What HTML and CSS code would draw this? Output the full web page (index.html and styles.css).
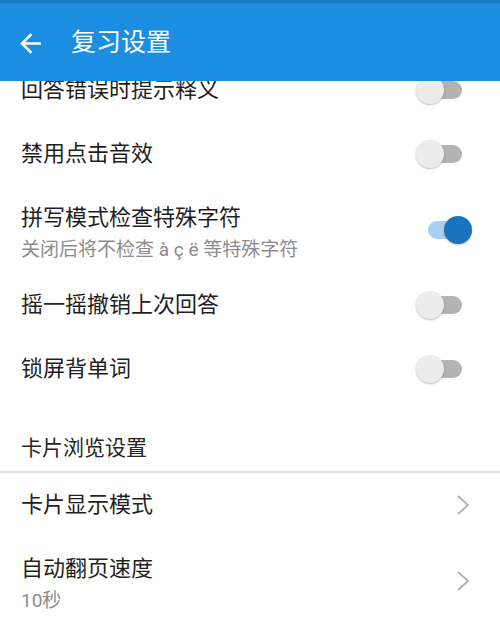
FILE: index.html
```html
<!DOCTYPE html>
<html lang="zh-CN">
<head>
<meta charset="utf-8">
<title>复习设置</title>
<link rel="stylesheet" href="styles.css">
</head>
<body>
<header class="appbar">
  <div class="status"></div>
  <div class="toolbar">
    <svg class="back" viewBox="0 0 24 24" width="31" height="31" aria-hidden="true">
      <path d="M20 11H7.83l5.59-5.59L12 4l-8 8 8 8 1.41-1.41L7.83 13H20v-2z" fill="#fff"/>
    </svg>
    <h1 class="title">复习设置</h1>
  </div>
</header>
<main class="viewport">
  <div class="list">
    <div class="row">
      <div class="label">回答错误时提示释义</div>
      <div class="switch"><span class="track"></span><span class="thumb"></span></div>
    </div>
    <div class="row">
      <div class="label">禁用点击音效</div>
      <div class="switch"><span class="track"></span><span class="thumb"></span></div>
    </div>
    <div class="row two">
      <div class="text">
        <div class="label">拼写模式检查特殊字符</div>
        <div class="summary">关闭后将不检查 à ç ë 等特殊字符</div>
      </div>
      <div class="switch on"><span class="track"></span><span class="thumb"></span></div>
    </div>
    <div class="row">
      <div class="label">摇一摇撤销上次回答</div>
      <div class="switch"><span class="track"></span><span class="thumb"></span></div>
    </div>
    <div class="row">
      <div class="label">锁屏背单词</div>
      <div class="switch"><span class="track"></span><span class="thumb"></span></div>
    </div>
    <div class="category">卡片浏览设置</div>
    <div class="row">
      <div class="label">卡片显示模式</div>
      <svg class="chevron" viewBox="0 0 14 22" width="14" height="22" aria-hidden="true">
        <polyline points="2,2 12,11 2,20" fill="none" stroke="#b3b3b3" stroke-width="2"/>
      </svg>
    </div>
    <div class="row two">
      <div class="text">
        <div class="label">自动翻页速度</div>
        <div class="summary">10秒</div>
      </div>
      <svg class="chevron" viewBox="0 0 14 22" width="14" height="22" aria-hidden="true">
        <polyline points="2,2 12,11 2,20" fill="none" stroke="#b3b3b3" stroke-width="2"/>
      </svg>
    </div>
  </div>
</main>
</body>
</html>
```
FILE: styles.css
```css
html, body {
  margin: 0;
  padding: 0;
}
body {
  width: 500px;
  height: 636px;
  overflow: hidden;
  background: #ffffff;
  font-family: Roboto, "Noto Sans CJK SC", sans-serif;
  color: #1f1f1f;
}
.appbar {
  position: relative;
  z-index: 2;
}
.status {
  height: 3px;
  background: #1677c3;
}
.toolbar {
  height: 78px;
  background: #1c8ee2;
  display: flex;
  align-items: center;
  padding-left: 15px;
  box-sizing: border-box;
}
.back {
  display: block;
  flex: none;
  margin-top: 2px;
}
.title {
  margin: 2px 0 0 25px;
  font-size: 25px;
  font-weight: normal;
  color: #ffffff;
  line-height: 30px;
}
.viewport {
  height: 555px;
  overflow: hidden;
}
.list {
  margin-top: -23px;
}
.row {
  display: flex;
  align-items: center;
  justify-content: space-between;
  height: 64px;
  padding: 0 28px 0 21px;
  box-sizing: border-box;
}
.row.two {
  height: 87px;
}
.row .chevron {
  margin-right: 2px;
  display: block;
}
.text {
  align-self: stretch;
  padding-top: 17px;
  box-sizing: border-box;
}
.label {
  font-size: 22px;
  line-height: 30px;
  color: #1f1f1f;
}
.summary {
  font-size: 19px;
  line-height: 33px;
  color: #8c8c8c;
}
.category {
  height: 72px;
  box-sizing: border-box;
  padding: 32px 21px 0;
  font-size: 21px;
  line-height: 30px;
  color: #262626;
  border-bottom: 2px solid #e4e4e4;
}
.switch {
  position: relative;
  width: 56px;
  height: 28px;
  flex: none;
}
.track {
  position: absolute;
  left: 12px;
  top: 5px;
  width: 34px;
  height: 18px;
  border-radius: 9px;
  background: #b3b3b3;
}
.thumb {
  position: absolute;
  left: 0;
  top: 0;
  width: 28px;
  height: 28px;
  border-radius: 50%;
  background: #ececec;
  box-shadow: 0 1px 2px rgba(0, 0, 0, 0.25);
}
.switch.on .track {
  background: #a9d0ee;
}
.switch.on .thumb {
  left: 28px;
  background: #1a73bd;
}
```
